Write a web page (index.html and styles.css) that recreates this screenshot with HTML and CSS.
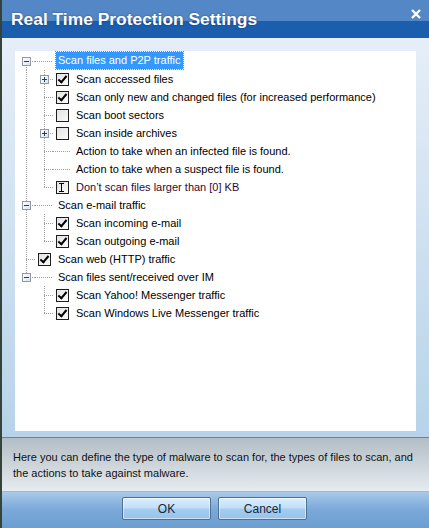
FILE: index.html
```html
<!DOCTYPE html>
<html>
<head>
    <meta charset="utf-8">
    <title>Real Time Protection Settings</title>
    <link rel="stylesheet" href="styles.css">
</head>
<body>
<div class="dialog">
    <!--标题栏-->
    <div class="titlebar">
        <span class="title">Real Time Protection Settings</span>
        <svg class="close" width="10" height="10" viewBox="0 0 10 10"><path d="M1 1L9 9M9 1L1 9" stroke="#fff" stroke-width="2.4"/></svg>
    </div>

    <!--树形设置-->
    <div class="body">
        <div class="panel">
            <div class="row">
                <span class="c f"><i class="box minus"></i></span><span class="c h"></span>
                <span class="label sel">Scan files and P2P traffic</span>
            </div>
            <div class="row">
                <span class="c v"></span><span class="c t"><i class="box plus"></i></span>
                <span class="c"><i class="chk on"></i></span>
                <span class="label">Scan accessed files</span>
            </div>
            <div class="row">
                <span class="c v"></span><span class="c t"></span>
                <span class="c"><i class="chk on"></i></span>
                <span class="label">Scan only new and changed files (for increased performance)</span>
            </div>
            <div class="row">
                <span class="c v"></span><span class="c t"></span>
                <span class="c"><i class="chk"></i></span>
                <span class="label">Scan boot sectors</span>
            </div>
            <div class="row">
                <span class="c v"></span><span class="c t"><i class="box plus"></i></span>
                <span class="c"><i class="chk"></i></span>
                <span class="label">Scan inside archives</span>
            </div>
            <div class="row">
                <span class="c v"></span><span class="c t"></span><span class="c h"></span>
                <span class="label">Action to take when an infected file is found.</span>
            </div>
            <div class="row">
                <span class="c v"></span><span class="c t"></span><span class="c h"></span>
                <span class="label">Action to take when a suspect file is found.</span>
            </div>
            <div class="row">
                <span class="c v"></span><span class="c l"></span>
                <span class="c"><i class="chk beam"></i></span>
                <span class="label hot">Don’t scan files larger than [0] KB</span>
            </div>
            <div class="row">
                <span class="c t"><i class="box minus"></i></span><span class="c h"></span>
                <span class="label">Scan e-mail traffic</span>
            </div>
            <div class="row">
                <span class="c v"></span><span class="c t"></span>
                <span class="c"><i class="chk on"></i></span>
                <span class="label">Scan incoming e-mail</span>
            </div>
            <div class="row">
                <span class="c v"></span><span class="c l"></span>
                <span class="c"><i class="chk on"></i></span>
                <span class="label">Scan outgoing e-mail</span>
            </div>
            <div class="row">
                <span class="c t"></span>
                <span class="c"><i class="chk on"></i></span>
                <span class="label">Scan web (HTTP) traffic</span>
            </div>
            <div class="row">
                <span class="c l"><i class="box minus"></i></span><span class="c h"></span>
                <span class="label">Scan files sent/received over IM</span>
            </div>
            <div class="row">
                <span class="c"></span><span class="c t"></span>
                <span class="c"><i class="chk on"></i></span>
                <span class="label">Scan Yahoo! Messenger traffic</span>
            </div>
            <div class="row">
                <span class="c"></span><span class="c l"></span>
                <span class="c"><i class="chk on"></i></span>
                <span class="label">Scan Windows Live Messenger traffic</span>
            </div>
        </div>
    </div>

    <!--说明-->
    <div class="info">
        Here you can define the type of malware to scan for, the types of files to scan, and the actions to take against malware.
    </div>

    <!--按钮-->
    <div class="buttons">
        <button class="btn">OK</button>
        <button class="btn">Cancel</button>
    </div>
</div>
</body>
</html>
```

FILE: styles.css
```css
*{ margin:0; padding:0; box-sizing:border-box;}
body{
    width:429px;
    height:528px;
    overflow:hidden;
    font-family:"Liberation Sans", Arial, sans-serif;
    font-size:11px;
    color:#000;
}
.dialog{
    height:528px;
    display:flex;
    flex-direction:column;
    border-left:2px solid #34443a;
}
.titlebar{
    height:38px;
    flex:none;
    display:flex;
    align-items:center;
    justify-content:space-between;
    padding:0 8px 0 9px;
    background:linear-gradient(to bottom,#5487c6 0,#5487c6 21px,#1b5eae 21px,#1b5eae 100%);
}
.title{
    color:#fff;
    font-size:17.4px;
    font-weight:bold;
    text-shadow:0 0 2px rgba(0,0,40,0.5);
}
.close{
    margin-top:-10px;
}
.body{
    flex:none;
    height:399px;
    padding:13px 13px 6px 13px;
    background:linear-gradient(to bottom,#e6eef8,#b7d3e9);
}
.panel{
    height:380px;
    background:#fff;
    padding:1px 0 0 2px;
}
.row{
    height:18px;
    display:flex;
    align-items:center;
}
/*树形虚线*/
.c{
    width:18px;
    height:18px;
    flex:none;
    display:flex;
    align-items:center;
    justify-content:center;
    background-repeat:no-repeat;
}
.v{
    background-image:repeating-linear-gradient(to bottom,#a0a0a0 0 1px,transparent 1px 2px);
    background-size:1px 18px;
    background-position:9px 0;
}
.t{
    background-image:repeating-linear-gradient(to bottom,#a0a0a0 0 1px,transparent 1px 2px),
                     repeating-linear-gradient(to right,#a0a0a0 0 1px,transparent 1px 2px);
    background-size:1px 18px,9px 1px;
    background-position:9px 0,9px 9px;
}
.l{
    background-image:repeating-linear-gradient(to bottom,#a0a0a0 0 1px,transparent 1px 2px),
                     repeating-linear-gradient(to right,#a0a0a0 0 1px,transparent 1px 2px);
    background-size:1px 10px,9px 1px;
    background-position:9px 0,9px 9px;
}
.f{
    background-image:repeating-linear-gradient(to bottom,#a0a0a0 0 1px,transparent 1px 2px),
                     repeating-linear-gradient(to right,#a0a0a0 0 1px,transparent 1px 2px);
    background-size:1px 9px,9px 1px;
    background-position:9px 9px,9px 9px;
}
.h{
    background-image:repeating-linear-gradient(to right,#a0a0a0 0 1px,transparent 1px 2px);
    background-size:18px 1px;
    background-position:0 9px;
}
/*展开按钮*/
.box{
    width:9px;
    height:9px;
    margin:1px 0 0 1px;
    border:1px solid #8f9ba8;
    background:linear-gradient(135deg,#fff,#dde3ea);
    position:relative;
}
.box::before{
    content:'';
    position:absolute;
    left:1px;
    top:3px;
    width:5px;
    height:1px;
    background:#23406a;
}
.plus::after{
    content:'';
    position:absolute;
    left:3px;
    top:1px;
    width:1px;
    height:5px;
    background:#23406a;
}
/*复选框*/
.chk{
    width:13px;
    height:13px;
    margin:1px 0 0 1px;
    border:1px solid #1e1e1e;
    background:linear-gradient(135deg,#e2e2e2,#fafafa);
    position:relative;
}
.chk.on::after{
    content:'';
    position:absolute;
    left:2px;
    top:0px;
    width:3px;
    height:7px;
    border:solid #000;
    border-width:0 2.5px 2.5px 0;
    transform:translate(1px,0) rotate(40deg);
}
.chk.beam::before{
    content:'';
    position:absolute;
    left:2px;
    top:1px;
    width:5px;
    height:7px;
    border-top:1px solid #000;
    border-bottom:1px solid #000;
}
.chk.beam::after{
    content:'';
    position:absolute;
    left:4px;
    top:1px;
    width:1px;
    height:9px;
    background:#000;
}
.label{
    margin-left:4px;
    padding:0 1px;
    line-height:16px;
    white-space:nowrap;
}
.sel{
    margin-left:3px;
    padding:0 2px;
    height:17px;
    margin-top:-2px;
    color:#fff;
    background:#3399ff;
    outline:1px dotted #b87a1a;
}
.hot{
    color:#300838;
}
/*说明*/
.info{
    flex:none;
    height:55px;
    padding:11px 12px 0 11px;
    line-height:16px;
    color:#111;
    border-top:1px solid #6f8497;
    border-bottom:1px solid #a5b6c4;
    background:linear-gradient(to bottom,#b3bdc5,#e6ecf0);
}
.buttons{
    flex:1;
    display:flex;
    justify-content:center;
    gap:7px;
    padding-top:5px;
    padding-right:2px;
    background:linear-gradient(to bottom,#aac9ea 0,#7aa8d8 18px,#6c9ed2 100%);
}
.btn{
    width:89px;
    height:23px;
    font-family:"Liberation Sans", Arial, sans-serif;
    font-size:12px;
    color:#16263a;
    border:1px solid #4f7090;
    border-radius:2px;
    background:linear-gradient(to bottom,#dcefff 0,#c2e0f8 45%,#a3ccee 55%,#98c3ea 100%);
    box-shadow:inset 0 0 0 1px rgba(255,255,255,0.5);
}
```
